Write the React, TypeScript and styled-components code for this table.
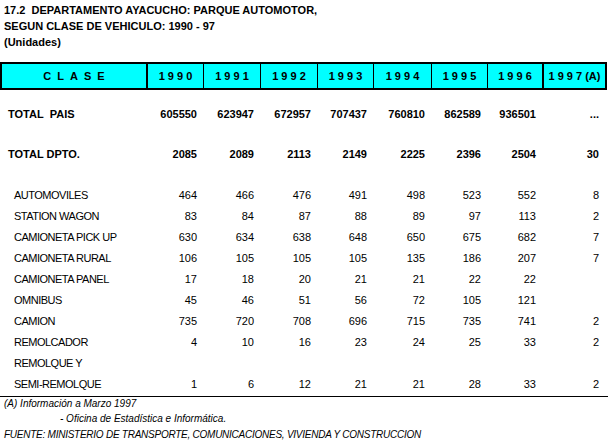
import React from "react";
import styled, { createGlobalStyle } from "styled-components";

const GlobalStyle = createGlobalStyle`
  html, body {
    margin: 0;
    padding: 0;
    background: #ffffff;
    overflow: hidden;
  }
  body {
    font-family: "Liberation Sans", Arial, sans-serif;
    color: #000000;
  }
`;

const COLS = "146px 57px 57px 57px 56px 58px 56px 55px 63px";
const HEAD_COLS = "144px 57px 57px 57px 56px 58px 56px 55px 63px";

const Page = styled.div`
  width: 608px;
  height: 443px;
  display: flex;
  flex-direction: column;
`;

const Title = styled.div`
  padding: 2px 0 0 4px;
  font-weight: bold;
  font-size: 11px;
  line-height: 16px;
  white-space: pre;
`;

const HeaderBox = styled.div`
  margin-top: 12px;
  width: 607px;
  box-sizing: border-box;
  display: grid;
  grid-template-columns: ${HEAD_COLS};
  border: 2px solid #000;
  background: #00ffff;
`;

const HeaderCell = styled.div<{ $border: number; $spacing?: number }>`
  height: 24px;
  box-sizing: border-box;
  border-left: ${(p) => p.$border}px solid #000;
  padding-left: ${(p) => p.$spacing ?? 0}px;
  display: flex;
  align-items: center;
  justify-content: center;
  font-weight: bold;
  font-size: 11px;
  white-space: pre;
  letter-spacing: ${(p) => p.$spacing ?? 0}px;
`;

const Body = styled.div`
  display: flex;
  flex-direction: column;
`;

const Row = styled.div<{ $height: number; $top?: number; $bold?: boolean }>`
  display: grid;
  grid-template-columns: ${COLS};
  height: ${(p) => p.$height}px;
  margin-top: ${(p) => p.$top ?? 0}px;
  align-items: center;
  font-size: 11px;
  font-weight: ${(p) => (p.$bold ? "bold" : "normal")};
`;

const Label = styled.div<{ $indent: number; $tight?: boolean }>`
  padding-left: ${(p) => p.$indent}px;
  white-space: pre;
  letter-spacing: ${(p) => (p.$tight ? "-0.5px" : "0")};
`;

const Num = styled.div`
  text-align: right;
  padding-right: 6px;
`;

const Rule = styled.div`
  margin-top: 2px;
  height: 2px;
  background: #000;
  width: 608px;
`;

const Note = styled.div<{ $height: number; $indent: number; $tight?: boolean }>`
  height: ${(p) => p.$height}px;
  line-height: ${(p) => p.$height}px;
  padding-left: ${(p) => p.$indent}px;
  font-style: italic;
  font-size: 10px;
  white-space: pre;
  letter-spacing: ${(p) => (p.$tight ? "-0.25px" : "0")};
`;

type DataRow = { label: string; values: string[] };

const totals: { label: string; values: string[]; top: number }[] = [
  {
    label: "TOTAL\u00a0\u00a0PAIS",
    values: ["605550", "623947", "672957", "707437", "760810", "862589", "936501", "..."],
    top: 13,
  },
  {
    label: "TOTAL DPTO.",
    values: ["2085", "2089", "2113", "2149", "2225", "2396", "2504", "30"],
    top: 19,
  },
];

const rows: DataRow[] = [
  { label: "AUTOMOVILES", values: ["464", "466", "476", "491", "498", "523", "552", "8"] },
  { label: "STATION WAGON", values: ["83", "84", "87", "88", "89", "97", "113", "2"] },
  { label: "CAMIONETA PICK UP", values: ["630", "634", "638", "648", "650", "675", "682", "7"] },
  { label: "CAMIONETA RURAL", values: ["106", "105", "105", "105", "135", "186", "207", "7"] },
  { label: "CAMIONETA PANEL", values: ["17", "18", "20", "21", "21", "22", "22", ""] },
  { label: "OMNIBUS", values: ["45", "46", "51", "56", "72", "105", "121", ""] },
  { label: "CAMION", values: ["735", "720", "708", "696", "715", "735", "741", "2"] },
  { label: "REMOLCADOR", values: ["4", "10", "16", "23", "24", "25", "33", "2"] },
  { label: "REMOLQUE Y", values: ["", "", "", "", "", "", "", ""] },
  { label: "SEMI-REMOLQUE", values: ["1", "6", "12", "21", "21", "28", "33", "2"] },
];

const years = ["1 9 9 0", "1 9 9 1", "1 9 9 2", "1 9 9 3", "1 9 9 4", "1 9 9 5", "1 9 9 6", "1 9 9 7 (A)"];

export default function App() {
  return (
    <>
      <GlobalStyle />
      <Page>
        <Title>
          {"17.2  DEPARTAMENTO AYACUCHO: PARQUE AUTOMOTOR,\nSEGUN CLASE DE VEHICULO: 1990 - 97\n(Unidades)"}
        </Title>
        <HeaderBox>
          <HeaderCell $border={0} $spacing={6}>CLASE</HeaderCell>
          {years.map((y, i) => (
            <HeaderCell key={y} $border={i === 0 || i === 7 ? 2 : 1}>
              {y}
            </HeaderCell>
          ))}
        </HeaderBox>
        <Body>
          {totals.map((t) => (
            <Row key={t.label} $height={21} $top={t.top} $bold>
              <Label $indent={8}>{t.label}</Label>
              {t.values.map((v, i) => (
                <Num key={i}>{v}</Num>
              ))}
            </Row>
          ))}
          {rows.map((r, idx) => (
            <Row key={r.label} $height={21} $top={idx === 0 ? 20 : 0}>
              <Label $indent={14} $tight>
                {r.label}
              </Label>
              {r.values.map((v, i) => (
                <Num key={i}>{v}</Num>
              ))}
            </Row>
          ))}
        </Body>
        <Rule />
        <Note $height={14} $indent={4}>(A) Información a Marzo 1997</Note>
        <Note $height={16} $indent={60}>- Oficina de Estadística e Informática.</Note>
        <Note $height={16} $indent={4} $tight>
          FUENTE: MINISTERIO DE TRANSPORTE, COMUNICACIONES, VIVIENDA Y CONSTRUCCION
        </Note>
      </Page>
    </>
  );
}
